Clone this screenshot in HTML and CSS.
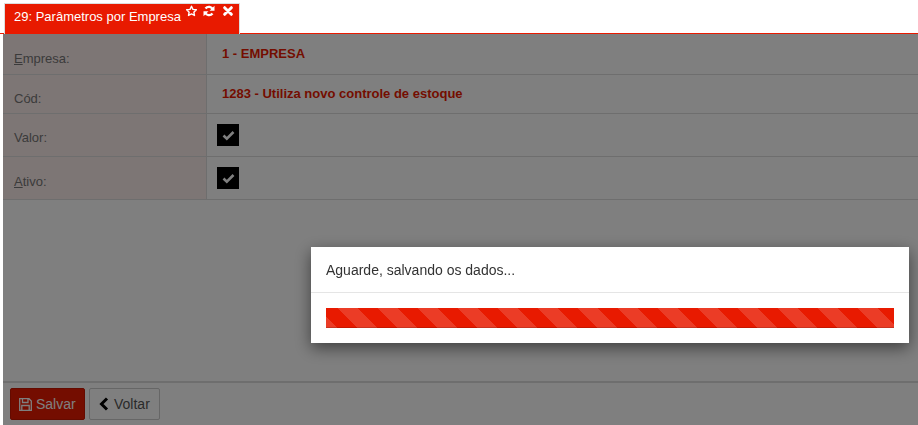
FILE: index.html
```html
<!doctype html>
<html lang="pt-BR">

<head>
  <meta charset="utf-8" />
  <title>Parâmetros por Empresa</title>
  <link rel="stylesheet" href="styles.css">
</head>

<body>
  <div class="tabs">
    <div class="tab">
      <span class="tab-title">29: Parâmetros por Empresa</span>
      <span class="tab-icons">
        <svg class="icon-star" width="13" height="12" viewBox="0 0 24 24"><path d="M12 2.500l2.900 6.200 6.800.9-5 4.700 1.300 6.700-6-3.300-6 3.300 1.300-6.700-5-4.700 6.800-.9z" fill="none" stroke="#fff" stroke-width="2.800" stroke-linejoin="round"/></svg>
        <svg class="icon-sync" width="12" height="12" viewBox="0 0 24 24"><path d="M20 9.500A8.600 8.600 0 0 0 5 7M4 14.500A8.600 8.600 0 0 0 19 17" fill="none" stroke="#fff" stroke-width="4.600"/><path d="M23 1.500v10h-10zM1 22.500v-10h10z" fill="#fff"/></svg>
        <svg class="icon-close" width="10" height="10" viewBox="0 0 24 24"><path d="M4 4l16 16M20 4L4 20" fill="none" stroke="#fff" stroke-width="7" stroke-linecap="round"/></svg>
      </span>
    </div>
  </div>

  <div class="page">
    <div class="form">
      <div class="row row-1">
        <div class="label"><u>E</u>mpresa:</div>
        <div class="value"><b>1 - EMPRESA</b></div>
      </div>
      <div class="row row-2">
        <div class="label">Cód:</div>
        <div class="value"><b>1283 - Utiliza novo controle de estoque</b></div>
      </div>
      <div class="row row-3">
        <div class="label">Valor:</div>
        <div class="value"><span class="check"><svg width="13" height="11" viewBox="0 0 13 11"><path d="M1.500 5.500l3.300 3.200 6.700-6.700" fill="none" stroke="#fff" stroke-width="2.600"/></svg></span></div>
      </div>
      <div class="row row-4">
        <div class="label"><u>A</u>tivo:</div>
        <div class="value"><span class="check"><svg width="13" height="11" viewBox="0 0 13 11"><path d="M1.500 5.500l3.300 3.200 6.700-6.700" fill="none" stroke="#fff" stroke-width="2.600"/></svg></span></div>
      </div>
    </div>

    <div class="footer">
      <button class="btn btn-save">
        <svg width="13" height="13" viewBox="0 0 13 13"><path d="M.7.700h9.300l2.300 2.300v9.300H.7z M3.500.700v3.800h5.500V.700 M2.800 12.300V7.500h7.400v4.800" fill="none" stroke="#fff" stroke-width="1.300"/></svg>
        Salvar
      </button>
      <button class="btn btn-back">
        <svg width="10" height="14" viewBox="0 0 10 14"><path d="M8 1.500L2.500 7 8 12.500" fill="none" stroke="#000" stroke-width="3"/></svg>
        Voltar
      </button>
    </div>
  </div>

  <div class="overlay"></div>

  <div class="modal">
    <div class="modal-header">Aguarde, salvando os dados...</div>
    <div class="modal-body">
      <div class="progress"></div>
    </div>
  </div>
</body>

</html>
```

FILE: styles.css
```css
html,
body {
  height: 100%;
  margin: 0;
  overflow: hidden;
}

body {
  display: flex;
  flex-direction: column;
  background-color: #fff;
  color: #333;
  font-family: "Liberation Sans", Arial, sans-serif;
  font-size: 14px;
}

/* tab bar */
.tabs {
  display: flex;
  flex: none;
  height: 34px;
  box-sizing: border-box;
  padding: 3px 0 0 4px;
  border-bottom: 1px solid #e81a00;
  position: relative;
  z-index: 3;
}

.tab {
  display: flex;
  width: 236px;
  height: 31px;
  box-sizing: border-box;
  background-color: #e81a00;
  border: 1px solid #ddd;
  border-bottom: none;
  color: #fff;
  padding-left: 9px;
}

.tab-title {
  font-size: 13px;
  line-height: 26px;
  white-space: nowrap;
}

.tab-icons {
  display: flex;
  align-items: flex-start;
  margin-left: 4px;
  padding-top: 1px;
}

.icon-sync {
  margin-left: 5px;
}

.icon-close {
  margin-left: 8px;
  margin-top: 1px;
}

/* form */
.page {
  flex: 1;
  display: flex;
  flex-direction: column;
  margin-left: 3px;
  min-height: 0;
}

.form {
  flex: 1;
  font-size: 13px;
}

.row {
  display: flex;
  box-sizing: border-box;
  border-bottom: 1px solid #ddd;
}

.row-1 { height: 41px; }
.row-2 { height: 39px; }
.row-3 { height: 43px; }
.row-4 { height: 43px; }

.label {
  width: 204px;
  box-sizing: border-box;
  border-right: 1px solid #ddd;
  background-color: #fbecea;
  color: #777;
  padding: 16px 0 0 11px;
  line-height: 16px;
}

.row-1 .label,
.row-4 .label {
  padding-top: 17px;
}

.value {
  flex: 1;
  padding: 11px 0 0 15px;
  line-height: 16px;
  color: #e81a00;
}

.row-1 .value {
  padding-top: 12px;
}

.row-3 .value,
.row-4 .value {
  padding: 10px 0 0 10px;
}

.check {
  display: flex;
  align-items: center;
  justify-content: center;
  width: 22px;
  height: 22px;
  background-color: #000;
}

/* footer */
.footer {
  display: flex;
  flex: none;
  gap: 4px;
  height: 44px;
  box-sizing: border-box;
  padding: 5px 0 0 7px;
  border-top: 2px solid #ddd;
}

.btn {
  display: flex;
  align-items: center;
  gap: 5px;
  height: 32px;
  box-sizing: border-box;
  font-family: "Liberation Sans", Arial, sans-serif;
  font-size: 14px;
  border-radius: 2px;
  padding: 0 9px;
}

.btn svg {
  flex: none;
}

.btn-save {
  width: 75px;
  gap: 4px;
  padding: 0 8px;
  background-color: #e81a00;
  border: 1px solid #c91600;
  color: #fff;
}

.btn-back {
  width: 71px;
  background-color: #fff;
  border: 1px solid #ccc;
  color: #555;
}

/* loading */
.overlay {
  position: fixed;
  top: 34px;
  left: 3px;
  right: 0;
  bottom: 0;
  background-color: #000;
  opacity: 0.5;
  z-index: 1;
}

.modal {
  position: fixed;
  top: 247px;
  left: 311px;
  width: 598px;
  height: 96px;
  background-color: #fff;
  box-shadow: 0 5px 15px rgba(0, 0, 0, 0.5);
  z-index: 2;
}

.modal-header {
  height: 46px;
  box-sizing: border-box;
  padding: 15px 15px 0;
  line-height: 16px;
  border-bottom: 1px solid #e5e5e5;
}

.modal-body {
  padding: 15px;
}

.progress {
  height: 20px;
  background-color: #e81a00;
  background-image: linear-gradient(45deg, rgba(255, 255, 255, 0.15) 25%, transparent 25%, transparent 50%, rgba(255, 255, 255, 0.15) 50%, rgba(255, 255, 255, 0.15) 75%, transparent 75%, transparent);
  background-size: 40px 40px;
  background-position: 12px 0;
  box-shadow: inset 0 -1px 0 rgba(0, 0, 0, 0.15);
}
```
